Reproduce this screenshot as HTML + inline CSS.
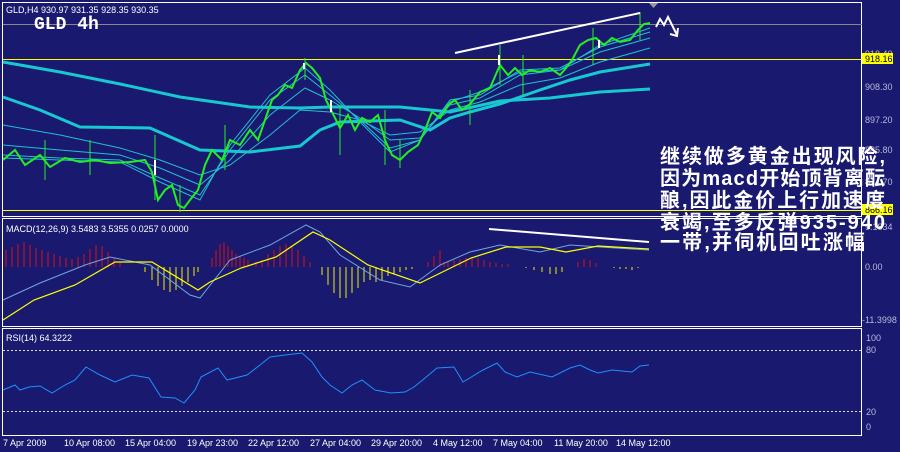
<!DOCTYPE html>
<html><head><meta charset="utf-8"><style>
html,body{margin:0;padding:0;background:#191970;width:900px;height:452px;overflow:hidden}
svg{display:block}
.t{font-family:"Liberation Sans",sans-serif;font-size:9px;fill:#fff}
.ax{font-family:"Liberation Sans",sans-serif;font-size:9px;fill:#b8b8d8}
.cn{font-family:"Liberation Sans","Noto Sans CJK SC","WenQuanYi Zen Hei",sans-serif;font-size:20px;font-weight:bold;fill:#fff}
</style></head><body>
<svg width="900" height="452" viewBox="0 0 900 452" xmlns="http://www.w3.org/2000/svg">
<rect width="900" height="452" fill="#191970"/>
<g fill="none" stroke="#fff" stroke-width="1">
<rect x="2.5" y="2.5" width="859" height="214"/>
<rect x="2.5" y="218.5" width="859" height="108"/>
<rect x="2.5" y="328.5" width="859" height="107"/>
</g>
<polygon points="649,3 658,3 653.5,8" fill="#999"/>
<line x1="3" y1="24.5" x2="862" y2="24.5" stroke="#888" stroke-width="1"/>
<line x1="3" y1="59.5" x2="862" y2="59.5" stroke="#ff0" stroke-width="1"/>
<line x1="3" y1="210.5" x2="862" y2="210.5" stroke="#ff0" stroke-width="1"/>
<polyline fill="none" stroke="#18c8d0" stroke-width="3" points="3,62 60,72 120,84 180,97 250,107 300,108 330,107 400,107 450,112 500,101 550,98 600,92 650,89"/>
<polyline fill="none" stroke="#18c8d0" stroke-width="3" points="3,97 40,110 80,127 150,128 200,150 250,152 300,146 320,130 340,122 400,120 430,130 450,118 470,112 500,104 540,90 570,80 600,72 650,64"/>
<g fill="none" stroke="#20c0d0" stroke-width="1">
<polyline points="3,125 60,135 120,148 160,160 200,175 230,165 270,135 300,110 330,112 360,120 390,135 420,132 450,110 480,102 520,85 560,78 600,62 650,48"/>
<polyline points="3,145 60,150 120,155 160,168 200,185 230,160 270,115 305,88 330,100 360,118 390,140 420,138 450,105 480,98 520,75 560,70 600,52 650,38"/>
<polyline points="3,155 60,158 120,160 160,178 200,195 230,150 270,100 305,75 330,95 360,120 390,148 420,140 450,100 480,95 520,70 560,68 600,47 650,32"/>
<polyline points="3,158 60,160 120,162 160,182 200,200 230,145 270,95 305,68 330,90 360,122 390,152 420,140 450,102 480,92 520,72 560,70 600,45 650,28"/>
</g>
<polyline fill="none" stroke="#22ee22" stroke-width="2" points="3,160 15,150 25,165 40,155 50,167 65,158 80,162 95,160 110,163 130,162 145,160 152,172 158,200 165,190 172,185 178,205 184,208 190,200 198,190 205,165 212,150 222,160 230,140 240,145 250,130 258,140 265,120 272,100 278,95 285,85 292,88 300,70 306,63 312,68 320,78 326,100 332,112 340,128 348,115 355,130 362,118 370,122 378,115 385,140 392,155 400,160 408,152 418,145 425,130 432,112 440,118 448,105 455,100 462,110 470,104 480,92 490,88 500,65 508,75 515,68 522,75 530,70 540,72 550,68 560,75 566,68 572,60 580,45 588,40 596,38 604,45 612,38 620,42 630,40 638,30 644,24 650,23"/>
<g stroke="#22ee22" stroke-width="1">
<line x1="45" y1="140" x2="45" y2="180"/><line x1="90" y1="140" x2="90" y2="175"/><line x1="155" y1="135" x2="155" y2="200"/><line x1="180" y1="185" x2="180" y2="212"/><line x1="225" y1="125" x2="225" y2="170"/><line x1="305" y1="58" x2="305" y2="80"/><line x1="340" y1="105" x2="340" y2="155"/><line x1="385" y1="110" x2="385" y2="165"/><line x1="400" y1="140" x2="400" y2="168"/><line x1="470" y1="90" x2="470" y2="125"/><line x1="500" y1="45" x2="500" y2="85"/><line x1="523" y1="55" x2="523" y2="95"/><line x1="593" y1="28" x2="593" y2="65"/><line x1="640" y1="12" x2="640" y2="40"/>
</g>
<g fill="#fff"><rect x="154" y="160" width="2" height="15"/><rect x="303" y="63" width="2" height="6"/><rect x="330" y="100" width="2" height="12"/><rect x="498" y="55" width="2" height="10"/><rect x="598" y="40" width="2" height="8"/></g>
<line x1="455" y1="53" x2="640" y2="13" stroke="#fff" stroke-width="2"/>
<polyline fill="none" stroke="#fff" stroke-width="2" points="656,27 660,19 664,25 668,17 677,35"/>
<polyline fill="none" stroke="#fff" stroke-width="2" points="670,34 677,36 678,28"/>
<text x="6" y="13" class="t">GLD,H4  930.97 931.35 928.35 930.35</text>
<text x="34" y="29" font-family="Liberation Mono,monospace" font-size="18" font-weight="bold" fill="#fff">GLD 4h</text>
<text x="865" y="57" class="ax">918.40</text>
<rect x="862" y="53" width="31" height="11" fill="#ff0"/>
<text x="865" y="62" class="t" style="fill:#000">918.16</text>
<text x="865" y="90" class="ax">908.30</text>
<text x="865" y="123" class="ax">897.20</text>
<text x="865" y="153" class="ax">885.80</text>
<text x="865" y="185" class="ax">874.70</text>
<rect x="862" y="204" width="31" height="11" fill="#ff0"/>
<text x="865" y="213" style="fill:#000" class="t">866.16</text>
<text x="6" y="232" class="t">MACD(12,26,9) 3.5483 3.5355 0.0257 0.0000</text>
<g stroke="#e01010" stroke-width="1" shape-rendering="crispEdges">
<path d="M6 267V250M12 267V247M18 267V244M24 267V242M30 267V245M36 267V248M42 267V250M48 267V252M54 267V254M60 267V256M66 267V258M72 267V259M78 267V257M84 267V254M90 267V249M96 267V245M102 267V246M108 267V252M114 267V258M120 267V262"/>
<path d="M212 267V258M216 267V250M220 267V244M224 267V242M228 267V246M232 267V250M236 267V254M240 267V256M244 267V258M248 267V260M256 267V262M262 267V260M268 267V254M274 267V250M280 267V246M286 267V244M292 267V246M298 267V250M304 267V256M310 267V262"/>
<path d="M428 267V262M434 267V256M440 267V250M444 267V262M448 267V261M454 267V260M460 267V259M466 267V258M472 267V257M478 267V258M484 267V260M490 267V262M496 267V263M502 267V264M508 267V264"/>
<path d="M578 267V262M584 267V259M590 267V260M596 267V263"/>
</g>
<g stroke="#f0f000" stroke-width="1" shape-rendering="crispEdges">
<path d="M145 267V272M152 267V280M158 267V286M164 267V290M170 267V292M176 267V290M182 267V286M188 267V282M194 267V276M198 267V272"/>
<path d="M322 267V275M328 267V285M334 267V293M340 267V298M346 267V298M352 267V293M358 267V288M364 267V282M370 267V280M376 267V282M382 267V280M388 267V276M394 267V274M400 267V272M406 267V270M412 267V269"/>
<path d="M526 267V268M534 267V270M542 267V272M550 267V274M556 267V274M562 267V272"/>
<path d="M614 267V268M620 267V269M626 267V269M632 267V270M638 267V268"/>
</g>
<polyline fill="none" stroke="#6fa8dc" stroke-width="1" points="3,300 40,283 85,265 110,257 150,265 190,295 200,298 230,260 270,245 306,225 320,232 340,255 380,280 410,287 440,265 470,252 500,245 540,252 570,245 600,247 649,250"/>
<polyline fill="none" stroke="#ff0" stroke-width="1.2" points="3,320 34,300 75,285 115,262 152,262 198,290 210,282 241,268 276,257 313,232 330,240 368,265 420,283 471,258 506,247 540,247 566,252 598,246 649,249"/>
<line x1="489" y1="229" x2="649" y2="242" stroke="#fff" stroke-width="2"/>
<text x="865" y="230" class="ax">9.1834</text>
<text x="865" y="270" class="ax">0.00</text>
<text x="862" y="323" class="ax">-11.3998</text>
<text x="6" y="341" class="t">RSI(14) 64.3222</text>
<line x1="3" y1="350.5" x2="862" y2="350.5" stroke="#ddd" stroke-dasharray="2,2"/>
<line x1="3" y1="411.5" x2="862" y2="411.5" stroke="#ddd" stroke-dasharray="2,2"/>
<polyline fill="none" stroke="#1e90ff" stroke-width="1" points="3,390 15,385 20,390 29,387 40,386 52,393 65,385 75,380 86,367 100,375 115,382 132,375 149,378 161,397 175,398 184,403 195,390 201,377 218,368 227,380 247,375 260,365 270,357 285,355 302,353 312,362 322,377 330,385 342,393 352,385 362,380 375,390 391,393 405,392 414,387 425,378 437,368 454,367 463,382 483,370 497,363 505,372 517,377 530,372 552,377 570,368 580,365 590,370 598,373 612,370 632,372 640,366 649,365"/>
<text x="866" y="341" class="ax">100</text>
<text x="866" y="353" class="ax">80</text>
<text x="866" y="415" class="ax">20</text>
<text x="866" y="430" class="ax">0</text>
<g class="ax" style="fill:#fff">
<text x="3" y="446">7 Apr 2009</text><text x="64" y="446">10 Apr 08:00</text><text x="125" y="446">15 Apr 04:00</text><text x="187" y="446">19 Apr 23:00</text><text x="248" y="446">22 Apr 12:00</text><text x="310" y="446">27 Apr 04:00</text><text x="371" y="446">29 Apr 20:00</text><text x="433" y="446">4 May 12:00</text><text x="493" y="446">7 May 04:00</text><text x="554" y="446">11 May 20:00</text><text x="616" y="446">14 May 12:00</text>
</g>
<g class="cn">
<text x="660" y="163" textLength="225">继续做多黄金出现风险,</text>
<text x="660" y="185" textLength="225">因为macd开始顶背离酝</text>
<text x="660" y="207" textLength="225">酿,因此金价上行加速度</text>
<text x="660" y="229" textLength="225">衰竭,至多反弹935-940</text>
<text x="660" y="249" textLength="205">一带,并伺机回吐涨幅</text>
</g>
</svg>
</body></html>
